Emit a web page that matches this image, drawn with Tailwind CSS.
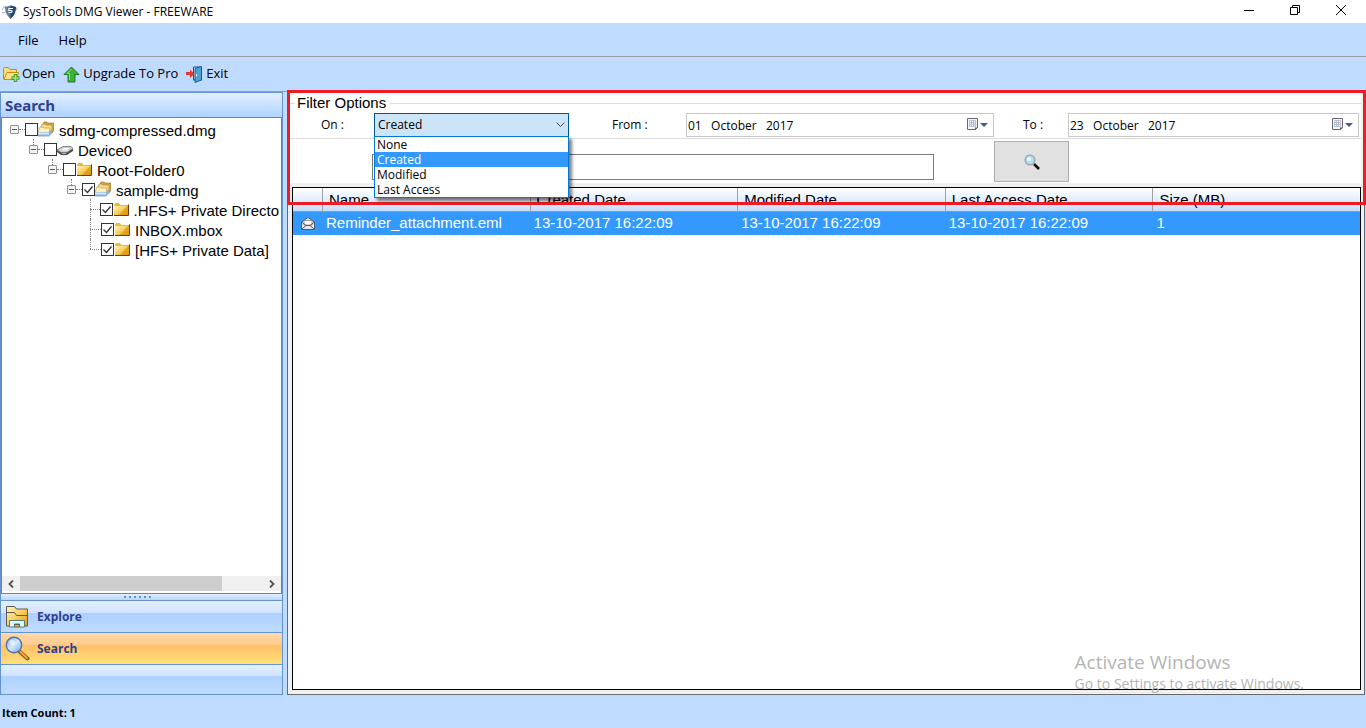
<!DOCTYPE html>
<html lang="en">
<head>
  <meta charset="utf-8">
  <meta name="viewport" content="width=device-width, initial-scale=1">
  <title>SysTools DMG Viewer - FREEWARE</title>
  <script src="https://cdn.jsdelivr.net/npm/@tailwindcss/browser@4"></script>
</head>
<body class="h-screen flex flex-col overflow-hidden bg-[#bfdbff] text-black text-[12px] font-['Open_Sans',sans-serif]">

  <!-- shared icons -->
  <svg class="absolute size-0" aria-hidden="true">
    <defs>
      <linearGradient id="gold" x1="0" y1="0" x2="1" y2="1">
        <stop offset="0" stop-color="#fff3b8"/><stop offset=".5" stop-color="#f7cf5c"/><stop offset="1" stop-color="#e39a0c"/>
      </linearGradient>
      <linearGradient id="glass" x1="0" y1="0" x2="1" y2="1">
        <stop offset="0" stop-color="#7fb0f2"/><stop offset=".5" stop-color="#d3e8ff"/><stop offset="1" stop-color="#69a5e8"/>
      </linearGradient>
    </defs>
    <symbol id="folder" viewBox="0 0 16 16">
      <path d="M1 4l1-2h4l1.500 2H15v10H1z" fill="#eab93c"/>
      <path d="M1 5h14v9H1z" fill="url(#gold)"/>
      <path d="M15 4v10H6z" fill="#dd960c" opacity=".7"/>
      <path d="M1 14.500h14.500V3.500" fill="none" stroke="#5f430d"/>
    </symbol>
    <symbol id="stack" viewBox="0 0 16 16">
      <path d="M5 4l1-3h3l1 1h6v7l-2 3H4z" fill="#d9a93a" stroke="#8c6b22" stroke-width=".6"/>
      <path d="M3 6l1-3h3l1 1h6v7l-2 2H2z" fill="#f4dc92" stroke="#a17d2e" stroke-width=".6"/>
      <path d="M1 8l1-2h3l1 1h6l-1 6H0z" fill="#fff0b8" stroke="#b39143" stroke-width=".6"/>
      <path d="M0 11h11l3-3v4l-3 3.500H0z" fill="#87add4"/>
      <path d="M0 11.500h11v2H0z" fill="#dbeafa"/>
    </symbol>
    <symbol id="drive" viewBox="0 0 16 16">
      <path d="M0 9L6 5.500h8l2 2v2.500L10 14H4L0 11z" fill="#4c4c4c"/>
      <path d="M0 9L6 5.500h8l2 2L10 11.500H4z" fill="#cfcfcf" stroke="#666" stroke-width=".6"/>
      <path d="M4 9L7 7h6l-3 2.500z" fill="#f5f5f5"/>
      <path d="M5 12.500h4" stroke="#bbb"/>
    </symbol>
    <symbol id="tick" viewBox="0 0 13 13">
      <path d="M2.500 6.500l3 3 5-6" fill="none" stroke="#333" stroke-width="1.300"/>
    </symbol>
    <symbol id="calendar" viewBox="0 0 12 13">
      <path d="M.5.500h10v9l-2 2H.5z" fill="#f4f5f8" stroke="#6d6570"/>
      <path d="M2.500 2.500h6v6h-6zM4.500 2.500v6M6.500 2.500v6M2.500 4.500h6M2.500 6.500h6" fill="none" stroke="#a9b5c6" stroke-width=".8"/>
      <path d="M8 12V9.500h3z" fill="#5d5560"/>
    </symbol>
  </svg>

  <!-- title bar -->
  <header class="h-[23px] shrink-0 bg-white flex items-center">
    <svg class="w-[16px] h-[14px] ml-[2px]" viewBox="0 0 16 14">
      <path d="M0 7.500q3 1 4-1M0 5q1-3 4-4M14 5l1.500-2.500" stroke="#9fa9b5" fill="none"/>
      <path d="M3 2l5.500-1.500L14 2q0 7-5.500 12Q3 9 3 2z" fill="#5d7ba3"/>
      <path d="M8.500.500L14 2q0 7-5.500 12z" fill="#24456f"/>
      <path d="M11 3.500H7.200q-1.200 1.500 0 2H9.500q1.200.5 0 2H6.500" fill="none" stroke="#fff" stroke-width="1.200"/>
    </svg>
    <h1 class="ml-[5px]">SysTools DMG Viewer - FREEWARE</h1>
    <div class="ml-auto mr-[2px] flex h-full pb-[3px]">
      <button class="w-[46px] flex items-center justify-center" aria-label="Minimize">
        <svg class="w-[10px] h-[10px]" viewBox="0 0 10 10"><path d="M0 5.500h10" stroke="#000"/></svg>
      </button>
      <button class="w-[46px] flex items-center justify-center" aria-label="Restore">
        <svg class="w-[10px] h-[10px]" viewBox="0 0 10 10"><path d="M.5 2.500h7v7h-7zM2.500 2.500v-2h7v7h-2" fill="none" stroke="#000"/></svg>
      </button>
      <button class="w-[46px] flex items-center justify-center" aria-label="Close">
        <svg class="w-[10px] h-[10px]" viewBox="0 0 10 10"><path d="M0 0l10 10M10 0L0 10" stroke="#000"/></svg>
      </button>
    </div>
  </header>

  <!-- menu -->
  <nav class="h-[33px] shrink-0 flex items-center pt-[2px] pl-[18px] gap-[20px] text-[13px]">
    <button>File</button>
    <button>Help</button>
  </nav>

  <!-- toolbar -->
  <div class="h-[36px] shrink-0 border-y border-[#9d9da1] flex items-center pl-[3px] text-[13px]">
    <button class="flex items-center gap-[2px]">
      <svg class="w-[17px] h-[17px]" viewBox="0 0 17 17">
        <path d="M.5 13V2.500l1-1h4l1.500 2h6.500V7" fill="#f7dc77" stroke="#c1901c"/>
        <path d="M1 13.500L4 6.500h11.500l-2 7z" fill="#ffe083" stroke="#c1901c"/>
        <path d="M12.500 8v8M8.500 12h8" stroke="#4d9a2f" stroke-width="3.500"/>
        <path d="M12.500 9v6M9.500 12h6" stroke="#a4e67a" stroke-width="1.500"/>
      </svg>
      Open
    </button>
    <button class="flex items-center gap-[3px] ml-[8px]">
      <svg class="w-[17px] h-[17px]" viewBox="0 0 17 17">
        <path d="M8.500 1L16 8.500h-4v7.500H5V8.500H1z" fill="#3fae3a" stroke="#1d7a20"/>
        <path d="M8.500 3L4 7.500h2.500V14" fill="none" stroke="#8fdb7e"/>
      </svg>
      Upgrade To Pro
    </button>
    <button class="flex items-center gap-[3px] ml-[8px]">
      <svg class="w-[17px] h-[17px]" viewBox="0 0 17 17">
        <path d="M7.500 1h8v13h-8z" fill="#cfe9fb" stroke="#1f4d76"/>
        <path d="M9 2.500l6.500-2v13.500L9 16.500z" fill="#4aa2de" stroke="#174a75" stroke-width=".8"/>
        <path d="M10.500 8v2.500" stroke="#fff"/>
        <path d="M0 6h4V3.500L8.500 8 4 12V9H0z" fill="#e23b2e"/>
      </svg>
      Exit
    </button>
  </div>

  <main class="flex-1 min-h-0 flex gap-[4px]">

    <!-- navigation pane -->
    <aside class="w-[283px] shrink-0 border border-[#6593cf] flex flex-col">
      <h2 class="h-[24px] shrink-0 flex items-center pl-[4px] bg-linear-to-b from-[#e3efff] to-[#afd2ff] text-[15px] font-bold text-[#2f3f90] font-['Noto_Sans',sans-serif]">Search</h2>
      <div class="flex-1 min-h-0 flex flex-col bg-white border border-[#7b7f86] overflow-hidden">
        <ul class="flex-1 pt-px pr-[2px] overflow-hidden text-[15px] font-['Liberation_Sans',sans-serif] whitespace-nowrap" role="tree">
          <li class="h-[20px] flex items-center pl-[8px]" role="treeitem">
            <button class="size-[9px] border border-[#919191] rounded-[1px] bg-[#f4f4f4] flex items-center justify-center" aria-label="Collapse"><span class="w-[5px] h-px bg-[#3a57a8]"></span></button>
            <span class="w-[6px] border-t border-dotted border-[#808080]"></span>
            <input id="n1" type="checkbox" class="appearance-none size-[13px] border border-[#333] bg-white">
            <svg class="size-[16px]"><use href="#stack"/></svg>
            <label for="n1" class="pl-[5px] pt-[4px]">sdmg-compressed.dmg</label>
          </li>
          <li class="h-[20px] flex items-center pl-[27px] relative" role="treeitem">
            <span class="absolute left-[31px] top-0 h-[6px] border-l border-dotted border-[#808080]"></span>
            <button class="size-[9px] border border-[#919191] rounded-[1px] bg-[#f4f4f4] flex items-center justify-center" aria-label="Collapse"><span class="w-[5px] h-px bg-[#3a57a8]"></span></button>
            <span class="w-[6px] border-t border-dotted border-[#808080]"></span>
            <input id="n2" type="checkbox" class="appearance-none size-[13px] border border-[#333] bg-white">
            <svg class="size-[16px]"><use href="#drive"/></svg>
            <label for="n2" class="pl-[5px] pt-[4px]">Device0</label>
          </li>
          <li class="h-[20px] flex items-center pl-[46px] relative" role="treeitem">
            <span class="absolute left-[50px] top-0 h-[6px] border-l border-dotted border-[#808080]"></span>
            <button class="size-[9px] border border-[#919191] rounded-[1px] bg-[#f4f4f4] flex items-center justify-center" aria-label="Collapse"><span class="w-[5px] h-px bg-[#3a57a8]"></span></button>
            <span class="w-[6px] border-t border-dotted border-[#808080]"></span>
            <input id="n3" type="checkbox" class="appearance-none size-[13px] border border-[#333] bg-white">
            <svg class="size-[16px]"><use href="#folder"/></svg>
            <label for="n3" class="pl-[5px] pt-[4px]">Root-Folder0</label>
          </li>
          <li class="h-[20px] flex items-center pl-[65px] relative" role="treeitem">
            <span class="absolute left-[69px] top-0 h-[6px] border-l border-dotted border-[#808080]"></span>
            <button class="size-[9px] border border-[#919191] rounded-[1px] bg-[#f4f4f4] flex items-center justify-center" aria-label="Collapse"><span class="w-[5px] h-px bg-[#3a57a8]"></span></button>
            <span class="w-[6px] border-t border-dotted border-[#808080]"></span>
            <span class="relative flex">
              <input id="n4" type="checkbox" checked class="appearance-none size-[13px] border border-[#333] bg-white">
              <svg class="absolute inset-0 size-[13px] pointer-events-none"><use href="#tick"/></svg>
            </span>
            <svg class="size-[16px]"><use href="#stack"/></svg>
            <label for="n4" class="pl-[5px] pt-[4px]">sample-dmg</label>
          </li>
          <li class="h-[20px] flex items-center pl-[88px] relative" role="treeitem">
            <span class="absolute left-[88px] top-0 h-full border-l border-dotted border-[#808080]"></span>
            <span class="w-[11px] border-t border-dotted border-[#808080]"></span>
            <span class="relative flex">
              <input id="n5" type="checkbox" checked class="appearance-none size-[13px] border border-[#333] bg-white">
              <svg class="absolute inset-0 size-[13px] pointer-events-none"><use href="#tick"/></svg>
            </span>
            <svg class="size-[16px] shrink-0"><use href="#folder"/></svg>
            <label for="n5" class="pl-[5px] pt-[4px]">.HFS+ Private Directo</label>
          </li>
          <li class="h-[20px] flex items-center pl-[88px] relative" role="treeitem">
            <span class="absolute left-[88px] top-0 h-full border-l border-dotted border-[#808080]"></span>
            <span class="w-[11px] border-t border-dotted border-[#808080]"></span>
            <span class="relative flex">
              <input id="n6" type="checkbox" checked class="appearance-none size-[13px] border border-[#333] bg-white">
              <svg class="absolute inset-0 size-[13px] pointer-events-none"><use href="#tick"/></svg>
            </span>
            <svg class="size-[16px]"><use href="#folder"/></svg>
            <label for="n6" class="pl-[5px] pt-[4px]">INBOX.mbox</label>
          </li>
          <li class="h-[20px] flex items-center pl-[88px] relative" role="treeitem">
            <span class="absolute left-[88px] top-0 h-[10px] border-l border-dotted border-[#808080]"></span>
            <span class="w-[11px] border-t border-dotted border-[#808080]"></span>
            <span class="relative flex">
              <input id="n7" type="checkbox" checked class="appearance-none size-[13px] border border-[#333] bg-white">
              <svg class="absolute inset-0 size-[13px] pointer-events-none"><use href="#tick"/></svg>
            </span>
            <svg class="size-[16px]"><use href="#folder"/></svg>
            <label for="n7" class="pl-[5px] pt-[4px]">[HFS+ Private Data]</label>
          </li>
        </ul>
        <!-- horizontal scrollbar -->
        <div class="h-[15px] mb-[2px] shrink-0 bg-[#f0f0f0] flex items-center">
          <button class="w-[18px] flex justify-center" aria-label="Scroll left"><svg class="w-[6px] h-[8px]" viewBox="0 0 6 8"><path d="M5 .5L1.500 4 5 7.500" fill="none" stroke="#505050" stroke-width="1.800"/></svg></button>
          <div class="flex-1 h-[15px]"><div class="h-full bg-[#cdcdcd]" style="width:83%"></div></div>
          <button class="w-[18px] flex justify-center" aria-label="Scroll right"><svg class="w-[6px] h-[8px]" viewBox="0 0 6 8"><path d="M1 .5L4.500 4 1 7.500" fill="none" stroke="#505050" stroke-width="1.800"/></svg></button>
        </div>
      </div>
      <div class="h-[6px] shrink-0 flex items-center justify-center gap-[3px] pr-[8px] bg-linear-to-b from-[#e3efff] to-[#b6d6ff]">
        <i class="size-[2px] bg-[#6593cf]"></i><i class="size-[2px] bg-[#6593cf]"></i><i class="size-[2px] bg-[#6593cf]"></i><i class="size-[2px] bg-[#6593cf]"></i><i class="size-[2px] bg-[#6593cf]"></i><i class="size-[2px] bg-[#6593cf]"></i>
      </div>
      <button class="h-[32px] shrink-0 border-t border-[#6593cf] flex items-center pl-[4px] gap-[7px] font-bold text-[#2f3f90] bg-[linear-gradient(#e3efff,#cfe3ff_40%,#add1ff_40%,#c0dbff)]">
        <svg class="size-[25px]" viewBox="0 0 25 25">
          <path d="M1.500 22V2.500h8l2 2.500h11V22z" fill="url(#gold)" stroke="#5b5b5b"/>
          <path d="M1.500 8.500h8l2 3h11" fill="none" stroke="#5b5b5b"/>
          <path d="M4.500 23V16.500h15V23h-5v-3h-5v3z" fill="#d4fbff" stroke="#5b7a7a"/>
          <path d="M9.500 20.500h5V23h-5z" fill="#f4b52b" stroke="#5b5b5b"/>
        </svg>
        Explore
      </button>
      <button class="h-[32px] shrink-0 border-t border-[#6593cf] flex items-center pl-[4px] gap-[7px] font-bold text-[#2f3f90] bg-[linear-gradient(#ffd9aa,#ffcb8b_38%,#ffbf69_38%,#ffe079)]">
        <svg class="size-[25px]" viewBox="0 0 25 25">
          <path d="M15 16l7.500 6.500" stroke="#8a5a1c" stroke-width="4" stroke-linecap="round"/>
          <path d="M15.500 16l6.500 6" stroke="#f3a847" stroke-width="2" stroke-linecap="round"/>
          <circle cx="9" cy="9" r="7.700" fill="url(#glass)" stroke="#5273a6" stroke-width="1.400"/>
          <circle cx="7" cy="6.500" r="2.500" fill="#fff" opacity=".6"/>
        </svg>
        Search
      </button>
      <div class="h-[30px] shrink-0 border-t border-[#6593cf] bg-[linear-gradient(#e3efff,#cfe3ff_38%,#add1ff_38%,#c0dbff)]"></div>
    </aside>

    <!-- results pane -->
    <section class="relative flex-1 min-w-0 flex flex-col bg-[#f0f0f0] border border-[#6a6a6a] pl-[2px] pr-[3px] pb-[4px] mr-px">
      <form class="bg-white h-[90px] shrink-0 flex flex-col">
        <fieldset class="h-[46px] relative border-b border-[#dcdcdc] flex flex-col">
          <div class="flex items-center h-[20px] text-[15px] font-['Liberation_Sans',sans-serif]">
            <span class="w-[5px] h-px bg-[#dcdcdc]"></span>
            <span class="px-[2px]">Filter Options</span>
            <span class="flex-1 ml-[2px] h-px bg-[#dcdcdc]"></span>
          </div>
          <div class="flex items-center text-[12px] pr-[2px]">
            <label for="on" class="w-[84px] pl-[31px]">On :</label>
            <div class="relative w-[195px]">
              <select id="on" class="appearance-none block w-full h-[24px] pl-[3px] bg-[#cce4f7] border border-[#005499]">
                <option>None</option>
                <option selected>Created</option>
                <option>Modified</option>
                <option>Last Access</option>
              </select>
              <svg class="absolute right-[4px] top-[9px] w-[9px] h-[6px] pointer-events-none" viewBox="0 0 9 6"><path d="M.5.500l4 4 4-4" fill="none" stroke="#444"/></svg>
              <!-- open list -->
              <ul class="absolute left-0 top-[23px] w-full z-20 bg-white border border-[#0078d7] leading-[15px] shadow-[3px_3px_3px_rgba(0,0,0,0.5)]" role="listbox">
                <li class="pl-[2px]" role="option">None</li>
                <li class="pl-[2px] bg-[#3399ff] text-white" role="option" aria-selected="true">Created</li>
                <li class="pl-[2px]" role="option">Modified</li>
                <li class="pl-[2px]" role="option">Last Access</li>
              </ul>
            </div>
            <label for="from" class="w-[117px] pl-[43px]">From :</label>
            <div class="relative flex-[308]">
              <input id="from" type="text" value="01   October   2017" class="block w-full h-[24px] pl-px border border-[#c8c8c8] bg-white">
              <button type="button" class="absolute right-[6px] top-[5px] flex items-center gap-[1px]" aria-label="Pick from date">
                <svg class="w-[12px] h-[13px]"><use href="#calendar"/></svg>
                <svg class="w-[8px] h-[4px]" viewBox="0 0 8 4"><path d="M0 0h8L4 4z" fill="#44588c"/></svg>
              </button>
            </div>
            <label for="to" class="w-[74px] pl-[29px]">To :</label>
            <div class="relative flex-[291]">
              <input id="to" type="text" value="23   October   2017" class="block w-full h-[24px] pl-px border border-[#c8c8c8] bg-white">
              <button type="button" class="absolute right-[6px] top-[5px] flex items-center gap-[1px]" aria-label="Pick to date">
                <svg class="w-[12px] h-[13px]"><use href="#calendar"/></svg>
                <svg class="w-[8px] h-[4px]" viewBox="0 0 8 4"><path d="M0 0h8L4 4z" fill="#44588c"/></svg>
              </button>
            </div>
          </div>
        </fieldset>
        <div class="flex items-start pt-[2px] pl-[82px]">
          <input type="text" aria-label="Search text" class="w-[562px] h-[26px] mt-[13px] border border-[#7a7a7a] bg-white">
          <button type="button" class="ml-[60px] w-[75px] h-[41px] bg-[#e1e1e1] border border-[#adadad] flex items-center justify-center" aria-label="Search">
            <svg class="size-[16px]" viewBox="0 0 16 16">
              <path d="M10 10l5 5" stroke="#111" stroke-width="2.600"/>
              <circle cx="6" cy="6" r="4.800" fill="#aee0fa" stroke="#a7a7a7" stroke-width="1.600"/>
              <circle cx="5" cy="5" r="2" fill="#e8f8ff"/>
            </svg>
          </button>
        </div>
      </form>

      <div class="flex-1 min-h-0 mt-[4px] ml-[2px] bg-white border border-black">
        <table class="w-full table-fixed border-collapse text-[15px] leading-[22px] font-['Liberation_Sans',sans-serif]">
          <colgroup><col class="w-[29px]"><col><col><col><col><col></colgroup>
          <thead>
            <tr class="h-[23px] bg-linear-to-b from-white to-[#c4dcfb]">
              <th></th>
              <th class="p-0 text-left font-normal"><div class="border-l border-[#a0a0a0] pl-[6px] pt-px">Name</div></th>
              <th class="p-0 text-left font-normal"><div class="border-l border-[#a0a0a0] pl-[6px] pt-px">Created Date</div></th>
              <th class="p-0 text-left font-normal"><div class="border-l border-[#a0a0a0] pl-[6px] pt-px">Modified Date</div></th>
              <th class="p-0 text-left font-normal"><div class="border-l border-[#a0a0a0] pl-[6px] pt-px">Last Access Date</div></th>
              <th class="p-0 text-left font-normal"><div class="border-l border-[#a0a0a0] pl-[6px] pt-px">Size (MB)</div></th>
            </tr>
          </thead>
          <tbody>
            <tr class="h-[23px] bg-[#3399ff] text-white border-t border-[#8f9bad]">
              <td class="p-0 pl-[8px]">
                <svg class="w-[14px] h-[13px]" viewBox="0 0 14 13">
                  <path d="M.5 5L7 .5 13.500 5v7.500H.5z" fill="#e8e8e8" stroke="#4f5f73"/>
                  <path d="M3 3.500h8V8H3z" fill="#fff" stroke="#7b7b7b" stroke-width=".7"/>
                  <path d="M.5 5L5 8.500h4L13.500 5M.5 12.500L5 8.500M13.500 12.500L9 8.500" fill="none" stroke="#4f5f73"/>
                </svg>
              </td>
              <td class="p-0 pl-[4px]">Reminder_attachment.eml</td>
              <td class="p-0 pl-[4px]">13-10-2017 16:22:09</td>
              <td class="p-0 pl-[4px]">13-10-2017 16:22:09</td>
              <td class="p-0 pl-[4px]">13-10-2017 16:22:09</td>
              <td class="p-0 pl-[4px]">1</td>
            </tr>
          </tbody>
        </table>
      </div>

      <!-- highlight frame -->
      <div class="absolute -left-px -right-[2px] -top-[3px] h-[115px] z-10 border-3 border-[#ed1c24] pointer-events-none"></div>

      <!-- activation watermark -->
      <div class="absolute right-[60px] bottom-0 text-[#b4b4b4] pointer-events-none">
        <p class="text-[19px] leading-[24px]">Activate Windows</p>
        <p class="text-[14px] leading-[20px]">Go to Settings to activate Windows.</p>
      </div>
    </section>
  </main>

  <footer class="h-[33px] shrink-0 flex items-center pl-[2px] pt-[3px] text-[11px] font-bold">Item Count: 1</footer>
</body>
</html>
